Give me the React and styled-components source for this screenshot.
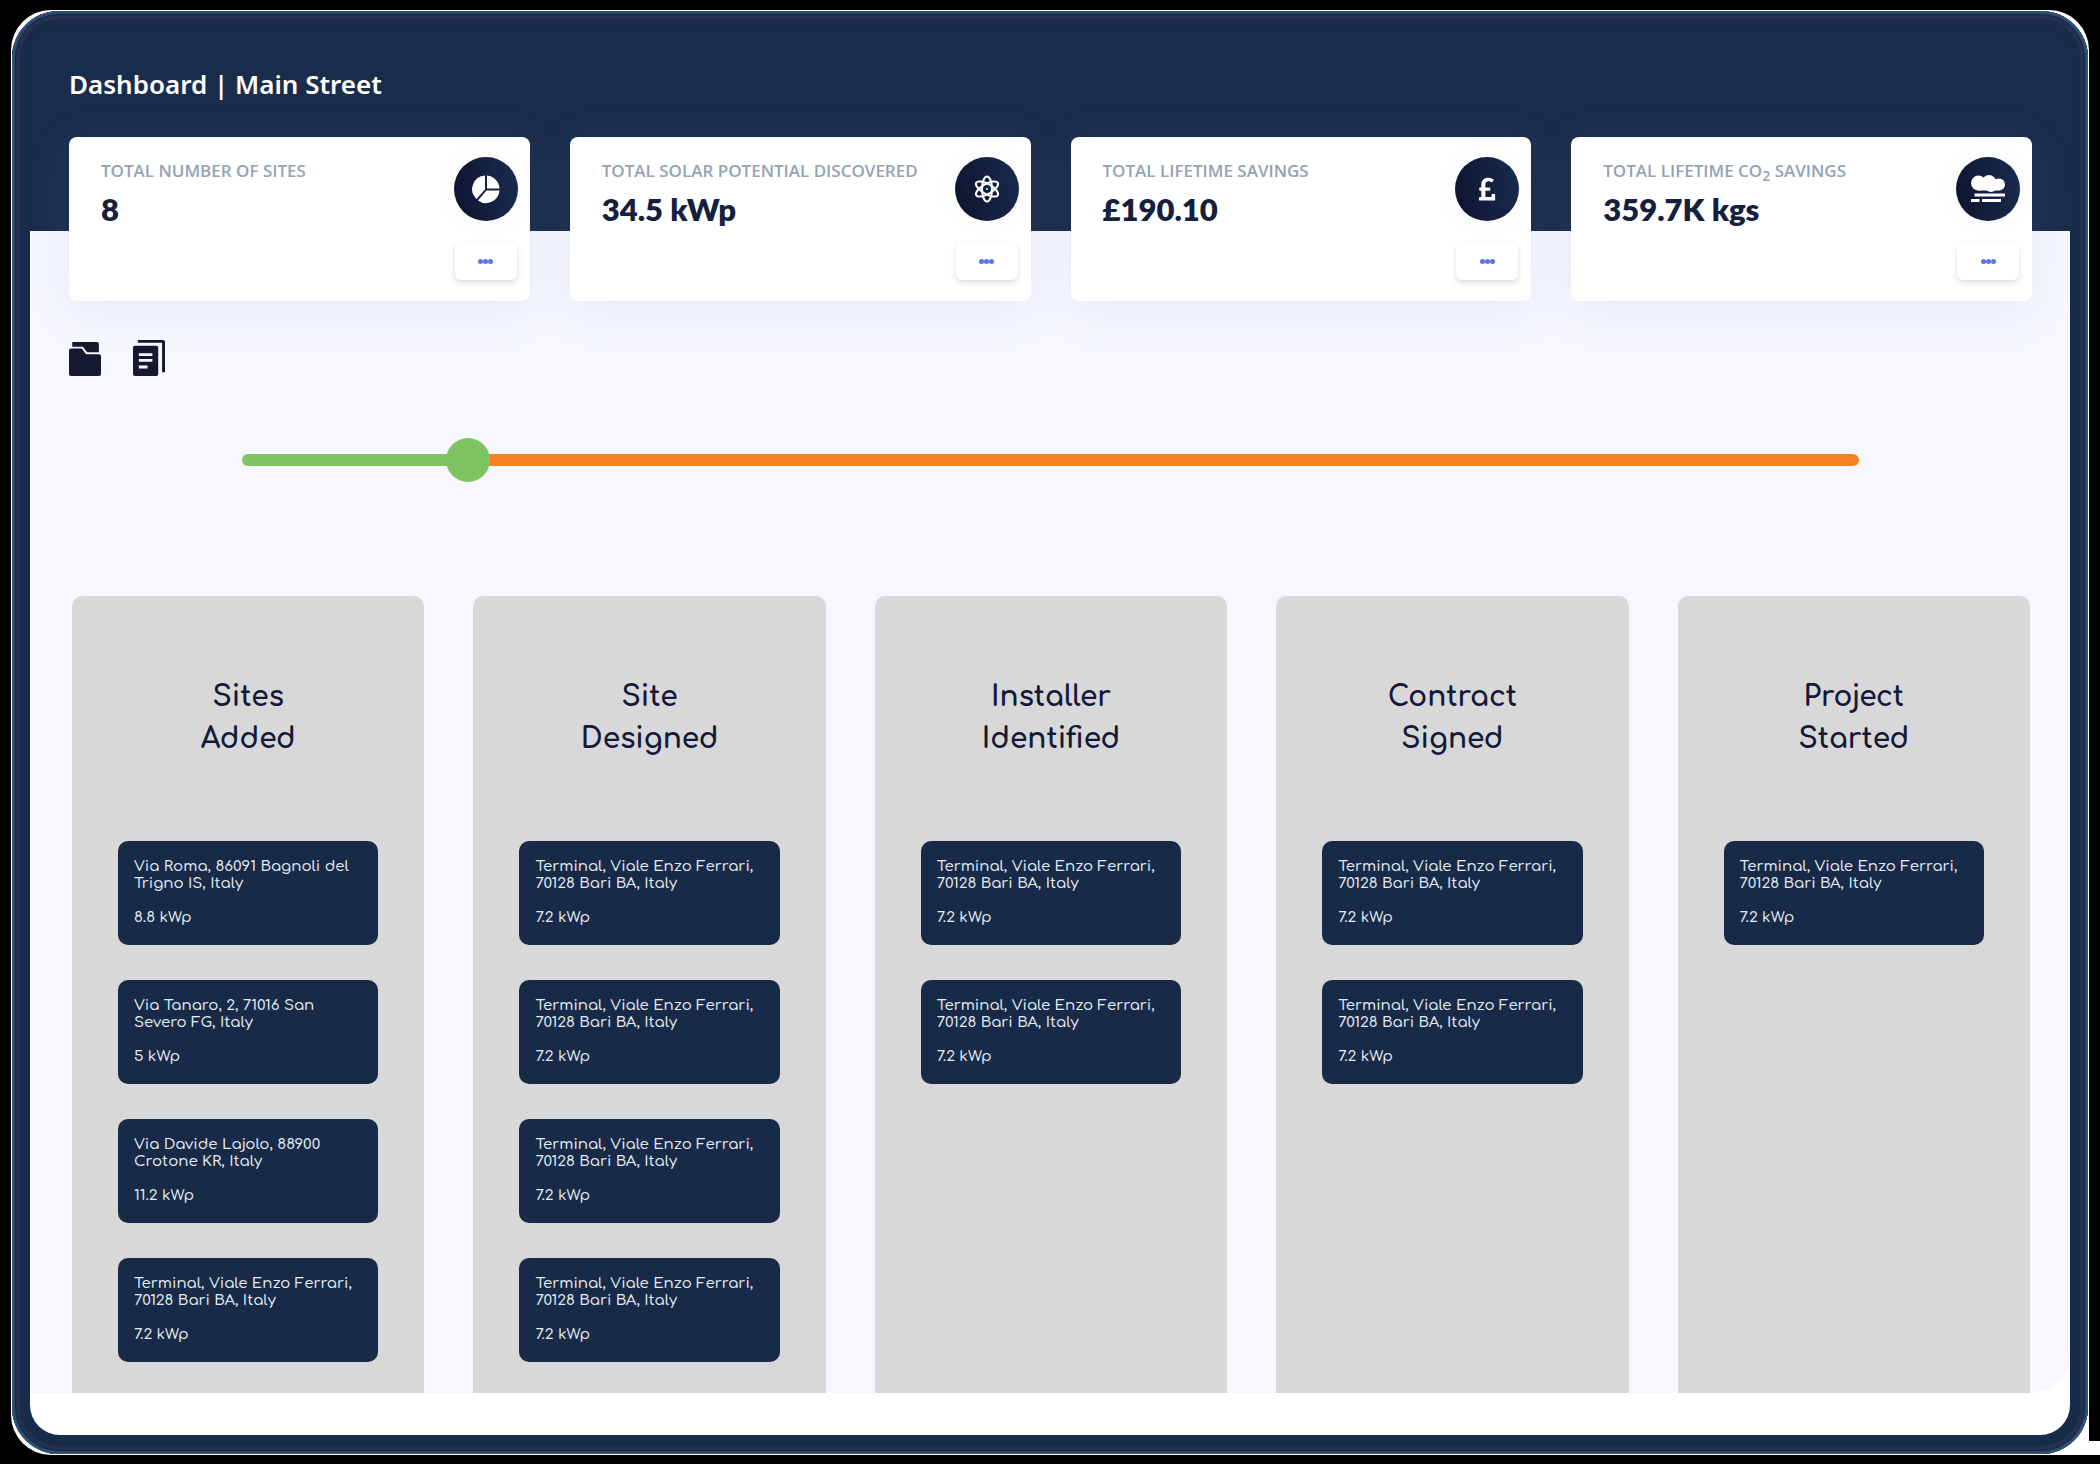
import React, { useId, useState } from "react";
import styled, { createGlobalStyle } from "styled-components";
import { FaPoundSign } from "react-icons/fa";

const GlobalStyle = createGlobalStyle`
  *, *::before, *::after { box-sizing: border-box; }
  html, body, #root { min-height: 100vh; }
  body { margin: 0; background: #000; font-family: "Open Sans", sans-serif; }
  #root { display: flex; }
  h1, h2, p, ul { margin: 0; padding: 0; }
`;

const Device = styled.div`
  position: relative;
  flex: 1;
  display: flex;
  margin: 10px 11px;
  padding: 1px;
  border-radius: 40px 40px 0 40px;
  background: #fff;

  &::after {
    content: "";
    position: absolute;
    right: -11px;
    bottom: 0;
    width: 11px;
    height: 14px;
    background: #fff;
  }
`;

const Bezel = styled.div`
  flex: 1;
  display: flex;
  padding: 19px 18px;
  border-radius: 47px;
  background: #162c4a;
  box-shadow: inset 0 0 0 1px #4a4a86, inset 0 0 0 3px #1c5560, inset 0 0 0 4px #1a1f5c, inset 0 0 0 8px #27304c;
`;

const Screen = styled.main`
  flex: 1;
  display: flex;
  flex-direction: column;
  padding-bottom: 42px;
  border-radius: 30px;
  overflow: hidden;
  background: linear-gradient(#1a2c4c 201px, #fff 201px);
`;

const Page = styled.div`
  flex: 1;
  display: flex;
  flex-direction: column;
  padding: 36px 38px 0 39px;
  border-bottom-right-radius: 38px;
  background: linear-gradient(#1a2c4c 201px, #f6f7ff 201px);
`;

const Title = styled.h1`
  color: #fff;
  font-family: "Noto Sans", "Open Sans", sans-serif;
  font-size: 26px;
  font-weight: 600;
  line-height: 36px;
`;

const StatGrid = styled.div`
  display: grid;
  grid-template-columns: repeat(4, 1fr);
  gap: 40px;
  margin-top: 35px;
`;

const StatCard = styled.section`
  display: flex;
  justify-content: space-between;
  padding: 20px 12px 21px 32px;
  border-radius: 8px;
  background: #fff;
  box-shadow: 0 8px 48px rgba(130, 150, 160, 0.11);
`;

const StatLabel = styled.h2`
  margin-top: 2px;
  color: #94a3b5;
  font-size: 17px;
  font-weight: 600;
  line-height: 24px;
  white-space: nowrap;
  sub { font-size: 14px; line-height: 0; }
`;

const StatValue = styled.p`
  margin-top: 6px;
  color: #14203d;
  font-family: Lato, sans-serif;
  font-size: 31px;
  font-weight: 800;
  line-height: 40px;
`;

const StatSide = styled.div`
  display: flex;
  flex-direction: column;
  align-items: center;
  gap: 22px;
`;

const Badge = styled.div`
  display: grid;
  place-items: center;
  width: 64px;
  height: 64px;
  border-radius: 50%;
  color: #fff;
  background: linear-gradient(80deg, #0d132e, #1a2c50);
  box-shadow: 0 0 28px rgba(0, 0, 0, 0.04);
`;

const MoreButton = styled.button`
  display: flex;
  align-items: center;
  justify-content: center;
  width: 62px;
  height: 37px;
  padding: 0;
  border: 0;
  border-radius: 6px;
  background: #fff;
  box-shadow: 0 3px 6px rgba(50, 50, 93, 0.13), 0 1px 3px rgba(0, 0, 0, 0.05);
`;

const Dot = styled.span`
  width: 5px;
  height: 5px;
  border-radius: 50%;
  background: #5f72ea;
`;

const Toolbar = styled.nav`
  display: flex;
  gap: 32px;
  margin-top: 39px;
`;

const ToolButton = styled.button`
  width: 32px;
  height: 36px;
  padding: 0;
  border: 0;
  color: #14192f;
  background: none;
  svg { display: block; }
`;

const ProgressRow = styled.div`
  padding: 62px 173px 0;
`;

const Range = styled.input`
  display: block;
  appearance: none;
  width: 100%;
  height: 44px;
  margin: 0;
  background: transparent;

  &::-webkit-slider-runnable-track {
    height: 12px;
    border-radius: 6px;
    background: linear-gradient(90deg, #7fc462 var(--progress), #f58220 var(--progress));
  }
  &::-webkit-slider-thumb {
    appearance: none;
    width: 44px;
    height: 44px;
    margin-top: -16px;
    border-radius: 50%;
    background: #7fc462;
  }
`;

const Board = styled.div`
  flex: 1;
  display: grid;
  grid-template-columns: repeat(5, 1fr);
  gap: 49px;
  margin-top: 114px;
  padding: 0 2px 0 3px;
`;

const Column = styled.section`
  padding: 80px 46px 31px;
  border-radius: 10px 10px 0 0;
  background: #d8d8d8;
`;

const rounded = `Comfortaa, Quicksand, Lato, sans-serif`;

const ColumnTitle = styled.h2`
  display: flex;
  flex-direction: column;
  align-items: center;
  color: #14193a;
  font-family: ${rounded};
  font-size: 28px;
  font-weight: 700;
  line-height: 42px;
`;

const SiteList = styled.ul`
  display: flex;
  flex-direction: column;
  gap: 35px;
  margin-top: 81px;
  list-style: none;
`;

const SiteCard = styled.li`
  display: flex;
  flex-direction: column;
  gap: 17px;
  height: 104px;
  padding: 17px 16px;
  border-radius: 10px;
  color: #e6eaf1;
  background: #172b49;
  font-family: ${rounded};
  font-size: 15px;
  font-weight: 500;
  line-height: 17px;
`;

const AddressLine = styled.span`
  display: block;
  white-space: nowrap;
`;

const PieIcon = () => (
  <svg width="28" height="30" viewBox="0 0 28 30" fill="currentColor" aria-hidden="true">
    <path d="M13 1.500v14L4.500 25A13.600 13.600 0 0 1 13 1.500z" />
    <path d="M15 1.500A13.600 13.600 0 0 1 27.500 14.500H15z" />
    <path d="M14.500 16.500h13A13.600 13.600 0 0 1 6 26.500z" />
  </svg>
);

const AtomIcon = () => (
  <svg width="28" height="30" viewBox="0 0 28 30" fill="none" stroke="currentColor" strokeWidth="2" aria-hidden="true">
    <ellipse cx="14" cy="15" rx="5" ry="12.500" />
    <ellipse cx="14" cy="15" rx="5" ry="12.500" transform="rotate(60 14 15)" />
    <ellipse cx="14" cy="15" rx="5" ry="12.500" transform="rotate(120 14 15)" />
    <circle cx="14" cy="15" r="1" fill="currentColor" stroke="none" />
  </svg>
);

const CloudIcon = () => (
  <svg width="34" height="28" viewBox="0 0 34 28" fill="currentColor" aria-hidden="true">
    <circle cx="7.500" cy="8" r="7.500" />
    <circle cx="18" cy="7" r="7" />
    <circle cx="28" cy="9.500" r="6" />
    <circle cx="20" cy="11" r="6" />
    <path d="M7 4h21v11.500H7zM3.500 18.500H34v3H3.500zM0 24h8.500v3H0zM11 24h19v3H11z" />
  </svg>
);

const FoldersIcon = () => (
  <svg width="32" height="36" viewBox="0 0 30 38" preserveAspectRatio="none" fill="currentColor" aria-hidden="true">
    <path d="M4 2h22q2 0 2 2v9H17l-4-6H3V3q0-1 1-1z" />
    <path d="M2 9h10l4 6h12q2 0 2 2v19q0 2-2 2H2q-2 0-2-2V11q0-2 2-2z" />
  </svg>
);

const NotesIcon = () => (
  <svg width="32" height="36" viewBox="0 0 33 38" preserveAspectRatio="none" fill="currentColor" aria-hidden="true">
    <path d="M5 0h26q2 0 2 2v32h-3V3H5z" />
    <path fillRule="evenodd" d="M2 6h22q2 0 2 2v28q0 2-2 2H2q-2 0-2-2V8q0-2 2-2zM6 14v3h14v-3zM6 20v3h14v-3zM6 27v3h9v-3z" />
  </svg>
);

const stats = [
  { label: "TOTAL NUMBER OF SITES", value: "8", icon: <PieIcon /> },
  { label: "TOTAL SOLAR POTENTIAL DISCOVERED", value: "34.5 kWp", icon: <AtomIcon /> },
  { label: "TOTAL LIFETIME SAVINGS", value: "£190.10", icon: <FaPoundSign size={26} aria-hidden="true" /> },
  { label: <>TOTAL LIFETIME CO<sub>2</sub> SAVINGS</>, value: "359.7K kgs", icon: <CloudIcon /> },
];

const terminal = { address: ["Terminal, Viale Enzo Ferrari,", "70128 Bari BA, Italy"], power: "7.2 kWp" };

const columns = [
  {
    title: ["Sites", "Added"],
    sites: [
      { address: ["Via Roma, 86091 Bagnoli del", "Trigno IS, Italy"], power: "8.8 kWp" },
      { address: ["Via Tanaro, 2, 71016 San", "Severo FG, Italy"], power: "5 kWp" },
      { address: ["Via Davide Lajolo, 88900", "Crotone KR, Italy"], power: "11.2 kWp" },
      terminal,
    ],
  },
  { title: ["Site", "Designed"], sites: [terminal, terminal, terminal, terminal] },
  { title: ["Installer", "Identified"], sites: [terminal, terminal] },
  { title: ["Contract", "Signed"], sites: [terminal, terminal] },
  { title: ["Project", "Started"], sites: [terminal] },
];

function Stat({ label, value, icon }) {
  return (
    <StatCard>
      <div>
        <StatLabel>{label}</StatLabel>
        <StatValue>{value}</StatValue>
      </div>
      <StatSide>
        <Badge>{icon}</Badge>
        <MoreButton aria-label="More">
          <Dot /><Dot /><Dot />
        </MoreButton>
      </StatSide>
    </StatCard>
  );
}

function Site({ address, power }) {
  return (
    <SiteCard>
      <div>
        {address.map((line) => <AddressLine key={line}>{line}</AddressLine>)}
      </div>
      <span>{power}</span>
    </SiteCard>
  );
}

function Progress() {
  const id = useId();
  const [value, setValue] = useState(13);
  return (
    <ProgressRow>
      <Range
        id={id}
        aria-label="Progress"
        type="range"
        min="0"
        max="100"
        value={value}
        onChange={(event) => setValue(Number(event.target.value))}
        style={{ "--progress": `${value}%` }}
      />
    </ProgressRow>
  );
}

export default function App() {
  return (
    <>
      <GlobalStyle />
      <Device>
        <Bezel>
          <Screen>
            <Page>
              <Title>Dashboard | Main Street</Title>
              <StatGrid>
                {stats.map((stat) => <Stat key={stat.value} {...stat} />)}
              </StatGrid>
              <Toolbar>
                <ToolButton aria-label="Folders"><FoldersIcon /></ToolButton>
                <ToolButton aria-label="Documents"><NotesIcon /></ToolButton>
              </Toolbar>
              <Progress />
              <Board>
                {columns.map(({ title, sites }) => (
                  <Column key={title.join(" ")}>
                    <ColumnTitle>
                      {title.map((word) => <span key={word}>{word}</span>)}
                    </ColumnTitle>
                    <SiteList>
                      {sites.map((site, index) => <Site key={index} {...site} />)}
                    </SiteList>
                  </Column>
                ))}
              </Board>
            </Page>
          </Screen>
        </Bezel>
      </Device>
    </>
  );
}
